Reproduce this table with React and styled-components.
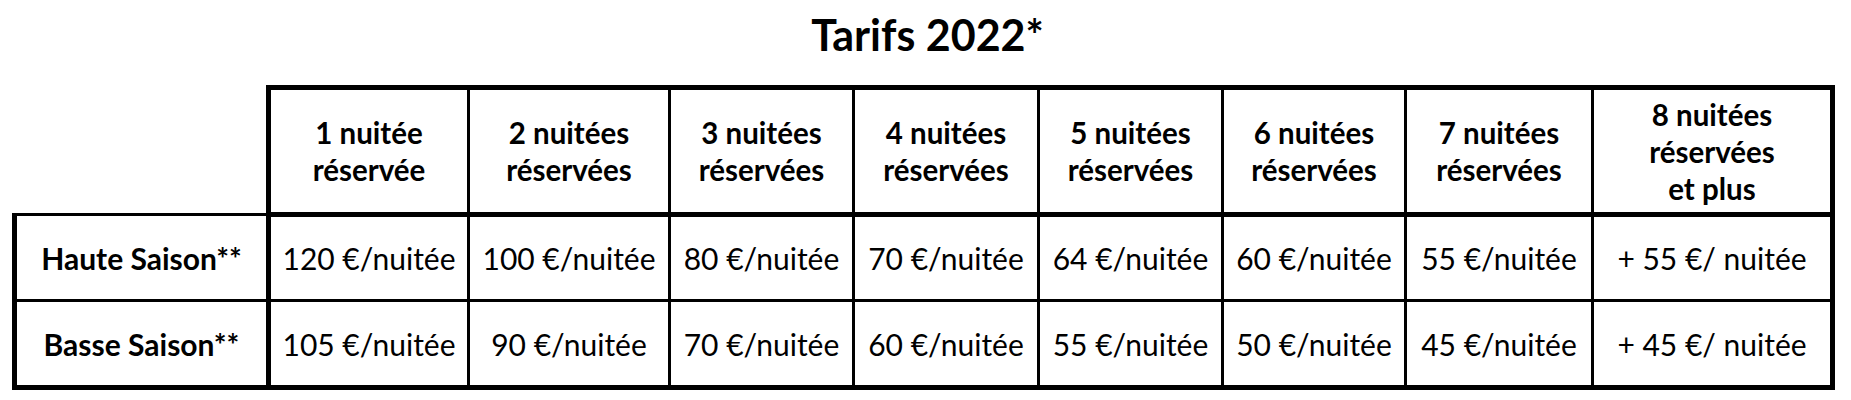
import React from "react";
import styled, { createGlobalStyle } from "styled-components";

const GlobalStyle = createGlobalStyle`
  html, body {
    margin: 0;
    padding: 0;
    background: #ffffff;
  }
  body {
    font-family: Lato, "Open Sans", "Liberation Sans", sans-serif;
    color: #000000;
  }
`;

const Page = styled.div`
  width: 1851px;
  height: 400px;
  background: #ffffff;
  display: flex;
  flex-direction: column;
  align-items: flex-start;
`;

const Title = styled.h1`
  align-self: stretch;
  margin: 0;
  height: 85px;
  padding-top: 7px;
  box-sizing: border-box;
  text-align: center;
  font-family: Lato, "Liberation Sans", sans-serif;
  font-weight: 700;
  font-size: 43px;
  line-height: 56px;
  padding-left: 4px;
`;

const Table = styled.table`
  border-collapse: collapse;
  table-layout: fixed;
  margin-left: 12px;
  font-family: Lato, "Liberation Sans", sans-serif;
`;

const THICK = "5px solid #000";
const THIN = "3px solid #000";

const EmptyHead = styled.th`
  border: none;
  padding: 0;
`;

const HeadCell = styled.th`
  border-top: ${THICK};
  border-bottom: ${THICK};
  border-left: ${(p) => (p.$first ? THICK : THIN)};
  border-right: ${(p) => (p.$last ? THICK : THIN)};
  height: 122px;
  padding: 0;
  text-align: center;
  vertical-align: middle;
  font-weight: 700;
  font-size: 29.5px;
  line-height: 37px;
`;

const Cell = styled.td`
  border-top: ${THIN};
  border-bottom: ${(p) => (p.$lastRow ? THICK : THIN)};
  border-left: ${(p) => (p.$label ? THICK : THIN)};
  border-right: ${(p) => (p.$label || p.$last ? THICK : THIN)};
  height: ${(p) => (p.$lastRow ? 83 : 82)}px;
  padding: 0;
  text-align: center;
  vertical-align: middle;
  font-weight: ${(p) => (p.$label ? 700 : 400)};
  font-size: 30px;
  line-height: 36px;
  white-space: nowrap;
`;

const widths = [254, 200, 201, 184, 185, 184, 183, 187, 240];

const headers = [
  ["1 nuitée", "réservée"],
  ["2 nuitées", "réservées"],
  ["3 nuitées", "réservées"],
  ["4 nuitées", "réservées"],
  ["5 nuitées", "réservées"],
  ["6 nuitées", "réservées"],
  ["7 nuitées", "réservées"],
  ["8 nuitées", "réservées", "et plus"],
];

const rows = [
  {
    label: "Haute Saison**",
    prices: [
      "120 €/nuitée",
      "100 €/nuitée",
      "80 €/nuitée",
      "70 €/nuitée",
      "64 €/nuitée",
      "60 €/nuitée",
      "55 €/nuitée",
      "+ 55 €/ nuitée",
    ],
  },
  {
    label: "Basse Saison**",
    prices: [
      "105 €/nuitée",
      "90 €/nuitée",
      "70 €/nuitée",
      "60 €/nuitée",
      "55 €/nuitée",
      "50 €/nuitée",
      "45 €/nuitée",
      "+ 45 €/ nuitée",
    ],
  },
];

export default function App() {
  return (
    <>
      <GlobalStyle />
      <Page>
        <Title>Tarifs 2022*</Title>
        <Table>
          <colgroup>
            {widths.map((w, i) => (
              <col key={i} style={{ width: w }} />
            ))}
          </colgroup>
          <thead>
            <tr>
              <EmptyHead />
              {headers.map((lines, i) => (
                <HeadCell key={i} $first={i === 0} $last={i === headers.length - 1}>
                  {lines.map((l, j) => (
                    <React.Fragment key={j}>
                      {j > 0 && <br />}
                      {l}
                    </React.Fragment>
                  ))}
                </HeadCell>
              ))}
            </tr>
          </thead>
          <tbody>
            {rows.map((row, r) => (
              <tr key={r}>
                <Cell $label $lastRow={r === rows.length - 1}>
                  {row.label}
                </Cell>
                {row.prices.map((p, i) => (
                  <Cell
                    key={i}
                    $last={i === row.prices.length - 1}
                    $lastRow={r === rows.length - 1}
                  >
                    {p}
                  </Cell>
                ))}
              </tr>
            ))}
          </tbody>
        </Table>
      </Page>
    </>
  );
}
